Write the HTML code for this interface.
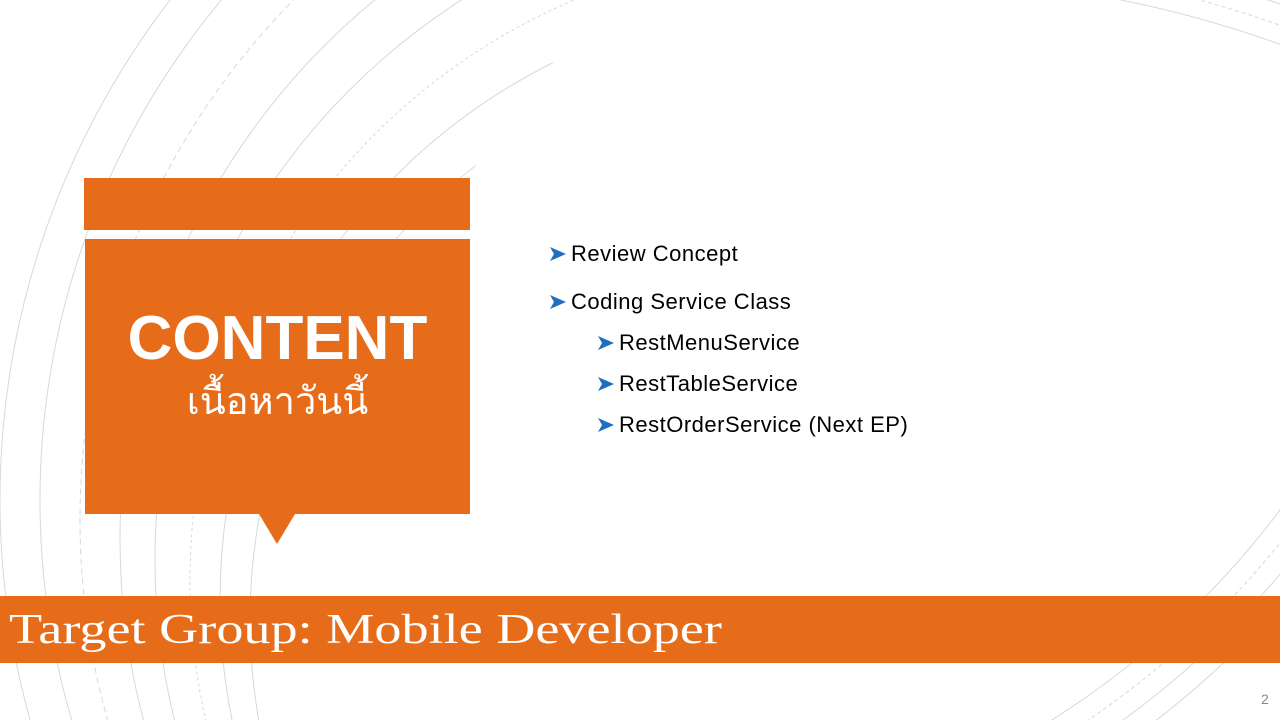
<!DOCTYPE html>
<html><head><meta charset="utf-8"><style>
html,body{margin:0;padding:0;width:1280px;height:720px;overflow:hidden;background:#fff;position:relative;font-family:"Liberation Sans",sans-serif}
.a{position:absolute}
.bul{position:absolute;font-size:22px;letter-spacing:0.5px;color:#000;white-space:nowrap}
.bul svg{position:absolute;left:-22px;top:5px}
</style></head><body>
<svg class="a" style="left:0;top:0;display:block" width="1280" height="720">
<defs>
<clipPath id="cl"><path d="M0 0 H600 L420 240 L300 720 H0 Z"/></clipPath>
<clipPath id="br"><rect x="1020" y="500" width="260" height="220"/></clipPath>
<clipPath id="tr"><rect x="1100" y="0" width="180" height="80"/></clipPath>
</defs>
<g fill="none" stroke="#d8d8d8" stroke-width="1" clip-path="url(#cl)">
<circle cx="820" cy="500" r="820"/>
<circle cx="820" cy="500" r="780"/>
<circle cx="820" cy="520" r="740" stroke-dasharray="6 4"/>
<circle cx="820" cy="540" r="700"/>
<circle cx="820" cy="560" r="665"/>
<circle cx="820" cy="580" r="630" stroke-dasharray="3 3"/>
<circle cx="820" cy="600" r="600"/>
<circle cx="820" cy="620" r="570"/>
</g>
<g fill="none" stroke="#d8d8d8" stroke-width="1" clip-path="url(#br)">
<circle cx="600" cy="0" r="850"/>
<circle cx="600" cy="0" r="870" stroke-dasharray="4 3"/>
<circle cx="600" cy="0" r="890"/>
<circle cx="600" cy="0" r="910"/>
</g>
<g fill="none" stroke="#d8d8d8" stroke-width="1" clip-path="url(#tr)">
<circle cx="900" cy="1100" r="1122"/>
<circle cx="900" cy="1100" r="1140" stroke-dasharray="4 3"/>
<circle cx="900" cy="1100" r="1160"/>
</g>
</svg>
<div class="a" style="left:84px;top:178px;width:386px;height:52px;background:#e66c1a"></div>
<div class="a" style="left:85px;top:239px;width:385px;height:275px;background:#e66c1a"></div>
<div class="a" style="left:259px;top:514px;width:0;height:0;border-left:18px solid transparent;border-right:18px solid transparent;border-top:30px solid #e66c1a"></div>
<div class="a" style="left:85px;top:303px;width:385px;text-align:center;color:#fff;font-weight:bold;font-size:62px;line-height:72px">CONTENT</div>
<div class="a" style="left:85px;top:380px;width:385px;text-align:center;color:#fff;font-size:38px;line-height:44px;font-family:'Liberation Serif','DejaVu Sans',serif">เนื้อหาวันนี้</div>
<div class="a" style="left:0;top:596px;width:1280px;height:67px;background:#e66c1a;overflow:hidden">
<div style="position:absolute;left:9px;top:8px;color:#fff;font-family:'Liberation Serif',serif;font-size:42px;line-height:52px;white-space:nowrap;transform:scaleX(1.29);transform-origin:0 0">Target Group: Mobile Developer</div></div>
<div class="a" style="left:1261px;top:691px;color:#888;font-size:14px">2</div>
<div class="bul" style="left:571px;top:241px"><svg width="18" height="16" viewBox="0 0 18 16"><path d="M1 1 L17 8 L1 15 L5 8 Z" fill="#1f6fc0"/></svg>Review Concept</div>
<div class="bul" style="left:571px;top:289px"><svg width="18" height="16" viewBox="0 0 18 16"><path d="M1 1 L17 8 L1 15 L5 8 Z" fill="#1f6fc0"/></svg>Coding Service Class</div>
<div class="bul" style="left:619px;top:330px"><svg width="18" height="16" viewBox="0 0 18 16"><path d="M1 1 L17 8 L1 15 L5 8 Z" fill="#1f6fc0"/></svg>RestMenuService</div>
<div class="bul" style="left:619px;top:371px"><svg width="18" height="16" viewBox="0 0 18 16"><path d="M1 1 L17 8 L1 15 L5 8 Z" fill="#1f6fc0"/></svg>RestTableService</div>
<div class="bul" style="left:619px;top:412px"><svg width="18" height="16" viewBox="0 0 18 16"><path d="M1 1 L17 8 L1 15 L5 8 Z" fill="#1f6fc0"/></svg>RestOrderService (Next EP)</div>
</body></html>
